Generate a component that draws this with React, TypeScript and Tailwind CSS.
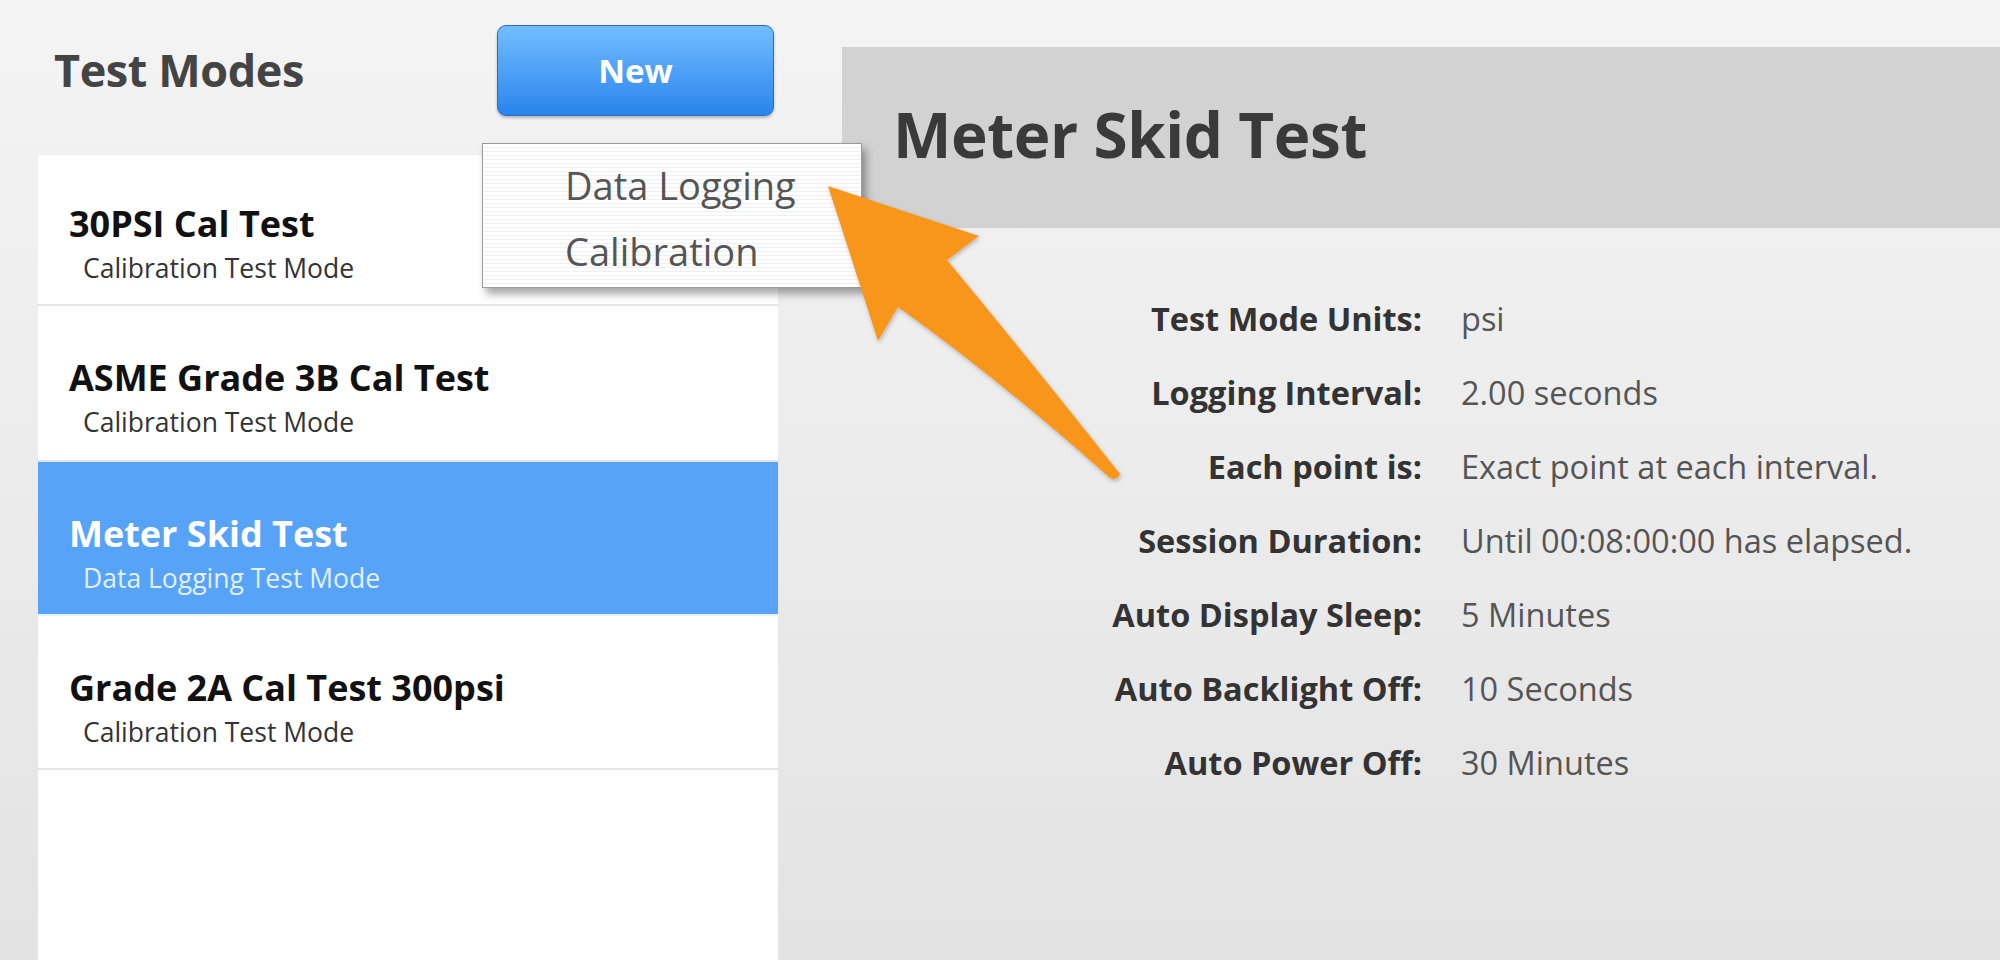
import React from 'react'

interface Mode {
  name: string
  kind: string
  rowClass: string
}

const modes: Mode[] = [
  { name: '30PSI Cal Test', kind: 'Calibration Test Mode', rowClass: 'h-[151px] pt-[45px]' },
  { name: 'ASME Grade 3B Cal Test', kind: 'Calibration Test Mode', rowClass: 'h-[156px] pt-[48px]' },
  { name: 'Meter Skid Test', kind: 'Data Logging Test Mode', rowClass: 'h-[154px] pt-[48px]' },
  { name: 'Grade 2A Cal Test 300psi', kind: 'Calibration Test Mode', rowClass: 'h-[154px] pt-[48px]' },
]

const details: [string, string][] = [
  ['Test Mode Units:', 'psi'],
  ['Logging Interval:', '2.00 seconds'],
  ['Each point is:', 'Exact point at each interval.'],
  ['Session Duration:', 'Until 00:08:00:00 has elapsed.'],
  ['Auto Display Sleep:', '5 Minutes'],
  ['Auto Backlight Off:', '10 Seconds'],
  ['Auto Power Off:', '30 Minutes'],
]

const selected = 2

function Arrow() {
  return (
    <svg
      className="absolute left-0 top-0 pointer-events-none"
      width="2000"
      height="960"
      viewBox="0 0 2000 960"
    >
      <defs>
        <filter id="arrowShadow" x="-20%" y="-20%" width="140%" height="140%">
          <feDropShadow dx="1" dy="2" stdDeviation="2" floodColor="#000" floodOpacity="0.25" />
        </filter>
      </defs>
      <path
        d="M828 186 L979 236 L947 260 Q1030 360 1120 474 Q1117 481 1110 478 Q1000 380 898 307 L878 341 Z"
        fill="#f8961f"
        filter="url(#arrowShadow)"
      />
    </svg>
  )
}

export default function App() {
  return (
    <div
      className="relative w-[2000px] h-[960px] overflow-hidden flex bg-gradient-to-b from-[#f4f4f4] to-[#e3e3e3]"
      style={{ fontFamily: '"Open Sans", "Noto Sans", sans-serif' }}
    >
      {/* left: mode list */}
      <div className="relative w-[778px] pl-[38px] flex flex-col">
        <div className="h-[155px] relative">
          <h1 className="absolute left-[16px] top-[40px] text-[45px] leading-[60px] font-bold text-[#444444] tracking-[-0.4px]">
            Test Modes
          </h1>
          <button className="absolute left-[459px] top-[25px] w-[277px] h-[91px] rounded-[9px] border border-[#2a6ccb] bg-gradient-to-b from-[#72bdff] to-[#2884ec] text-white text-[33px] font-bold shadow-[0_2px_3px_rgba(0,0,0,0.25)]">
            New
          </button>
        </div>

        <div className="flex-1 bg-white">
          {modes.map((m, i) => (
            <div
              key={m.name}
              className={
                'pl-[31px] border-b-2 ' +
                m.rowClass +
                ' ' +
                (i === selected ? 'bg-[#57a3f8] border-[#e8f2fc]' : 'border-[#e4e4e4]')
              }
            >
              <div
                className={
                  'text-[36px] leading-[48px] font-bold ' +
                  (i === selected ? 'text-white' : 'text-[#111111]')
                }
              >
                {m.name}
              </div>
              <div
                className={
                  'pl-[14px] text-[26.5px] leading-[40px] ' +
                  (i === selected ? 'text-[#e3f0ff]' : 'text-[#333333]')
                }
              >
                {m.kind}
              </div>
            </div>
          ))}
        </div>

        {/* new-mode menu */}
        <div className="absolute left-[482px] top-[143px] w-[380px] h-[145px] border border-[#9a9a9a] bg-[repeating-linear-gradient(to_bottom,#ffffff_0px,#ffffff_3px,#eef0f3_3px,#eef0f3_4px)] shadow-[4px_6px_8px_rgba(0,0,0,0.35)] pl-[82px] pt-[8px]">
          <div className="text-[38px] leading-[66px] text-[#555555]">Data Logging</div>
          <div className="text-[38px] leading-[66px] text-[#555555]">Calibration</div>
        </div>
      </div>

      {/* right: selected mode details */}
      <div className="flex-1 pl-[64px] pt-[47px] flex flex-col">
        <div className="h-[181px] bg-[#d2d2d2] flex items-center pl-[51px] pb-[8px]">
          <h2 className="text-[62px] font-bold text-[#3a3a3a] tracking-[-0.4px] leading-none">
            Meter Skid Test
          </h2>
        </div>

        <div className="mt-[54px] grid grid-cols-[580px_1fr] gap-x-[39px]">
          {details.map(([label, value]) => (
            <React.Fragment key={label}>
              <div className="h-[74px] flex items-center justify-end text-[32.5px] font-bold text-[#333333]">
                {label}
              </div>
              <div className="h-[74px] flex items-center text-[32.5px] text-[#555555]">
                {value}
              </div>
            </React.Fragment>
          ))}
        </div>
      </div>

      <Arrow />
    </div>
  )
}
